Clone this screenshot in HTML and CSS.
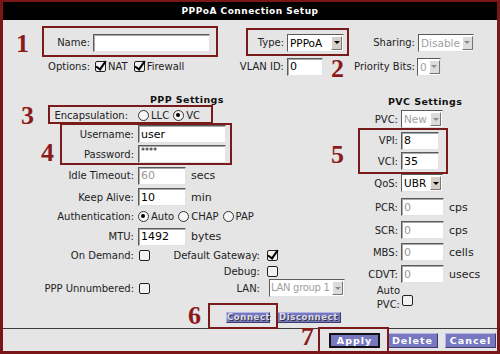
FILE: index.html
```html
<!DOCTYPE html>
<html lang="en">
<head>
  <meta charset="UTF-8">
  <title>PPPoA Connection Setup</title>
  <link rel="stylesheet" href="styles.css">
</head>
<body>

  <div class="frame">
    <div class="title">PPPoA Connection Setup</div>

    <!-- general -->
    <div class="top">
      <span class="lbl">Name:</span>
      <input class="txt w-name" type="text" value="">
      <span class="lbl">Type:</span>
      <span class="sel w-type"><span class="sel-text">PPPoA</span><span class="sel-arrow"></span></span>
      <span class="lbl">Sharing:</span>
      <span class="sel w-share off"><span class="sel-text">Disable</span><span class="sel-arrow"></span></span>

      <span class="lbl">Options:</span>
      <span class="checks">
        <span class="cb on"></span>NAT
        <span class="cb on"></span>Firewall
      </span>
      <span class="lbl">VLAN ID:</span>
      <input class="txt w-vlan" type="text" value="0">
      <span class="lbl">Priority Bits:</span>
      <span class="sel w-prio off"><span class="sel-text">0</span><span class="sel-arrow"></span></span>
    </div>

    <div class="middle">
      <!-- PPP -->
      <div class="ppp">
        <div class="head ppp-head">PPP Settings</div>

        <span class="lbl lbl-encap">Encapsulation:</span>
        <span class="field">
          <span class="rd"></span>LLC
          <span class="rd on"></span>VC
        </span>

        <span class="lbl">Username:</span>
        <span class="field"><input class="txt w-user" type="text" value="user"></span>

        <span class="lbl">Password:</span>
        <span class="field"><input class="txt w-user pw" type="text" value="****"></span>

        <span class="lbl">Idle Timeout:</span>
        <span class="field"><input class="txt w-short dim" type="text" value="60"><span class="unit">secs</span></span>

        <span class="lbl">Keep Alive:</span>
        <span class="field"><input class="txt w-short" type="text" value="10"><span class="unit">min</span></span>

        <span class="lbl">Authentication:</span>
        <span class="field">
          <span class="rd on"></span>Auto
          <span class="rd"></span>CHAP
          <span class="rd"></span>PAP
        </span>

        <span class="lbl">MTU:</span>
        <span class="field"><input class="txt w-short" type="text" value="1492"><span class="unit">bytes</span></span>

        <span class="lbl">On Demand:</span>
        <span class="cb"></span>
        <span class="lbl c3">Default Gateway:</span>
        <span class="c4"><span class="cb on"></span></span>

        <span class="lbl c3">Debug:</span>
        <span class="c4"><span class="cb"></span></span>

        <span class="lbl">PPP Unnumbered:</span>
        <span class="cb"></span>
        <span class="lbl c3">LAN:</span>
        <span class="c4"><span class="sel w-lan off"><span class="sel-text">LAN group 1</span><span class="sel-arrow"></span></span></span>
      </div>

      <!-- PVC -->
      <div class="pvc">
        <div class="head pvc-head">PVC Settings</div>

        <span class="lbl">PVC:</span>
        <span class="field"><span class="sel w-pvc off"><span class="sel-text">New</span><span class="sel-arrow"></span></span></span>

        <span class="lbl">VPI:</span>
        <span class="field"><input class="txt w-vp" type="text" value="8"></span>

        <span class="lbl">VCI:</span>
        <span class="field"><input class="txt w-vp" type="text" value="35"></span>

        <span class="lbl">QoS:</span>
        <span class="field"><span class="sel w-pvc"><span class="sel-text">UBR</span><span class="sel-arrow"></span></span></span>

        <span class="lbl">PCR:</span>
        <span class="field"><input class="txt w-rate dim" type="text" value="0"><span class="unit">cps</span></span>

        <span class="lbl">SCR:</span>
        <span class="field"><input class="txt w-rate dim" type="text" value="0"><span class="unit">cps</span></span>

        <span class="lbl">MBS:</span>
        <span class="field"><input class="txt w-rate dim" type="text" value="0"><span class="unit">cells</span></span>

        <span class="lbl">CDVT:</span>
        <span class="field"><input class="txt w-rate dim" type="text" value="0"><span class="unit">usecs</span></span>

        <span class="lbl lbl-two">Auto<br>PVC:</span>
        <span class="field"><span class="cb"></span></span>
      </div>
    </div>

    <div class="actions">
      <button class="btn-sm w-conn">Connect</button>
      <button class="btn-sm w-disc">Disconnect</button>
    </div>

    <div class="footer">
      <button class="btn focus">Apply</button>
      <button class="btn">Delete</button>
      <button class="btn">Cancel</button>
    </div>

    <!-- callouts -->
    <div class="box b1"></div>
    <div class="box b2"></div>
    <div class="box b3"></div>
    <div class="box b4"></div>
    <div class="box b5"></div>
    <div class="box b6"></div>
    <div class="box b7"></div>
    <span class="num n1">1</span>
    <span class="num n2">2</span>
    <span class="num n3">3</span>
    <span class="num n4">4</span>
    <span class="num n5">5</span>
    <span class="num n6">6</span>
    <span class="num n7">7</span>
  </div>

</body>
</html>
```

FILE: styles.css
```css
body {
  margin: 0;
  background: #fff;
}

.frame {
  position: relative;
  width: 500px;
  height: 354px;
  box-sizing: border-box;
  border: 3px solid #7b1616;
  border-top-width: 2px;
  background: #e5e5e5;
  font-family: "DejaVu Sans", sans-serif;
  font-size: 10px;
  color: #222;
  overflow: hidden;
}

.title {
  height: 18px;
  line-height: 18px;
  background: #000;
  color: #fff;
  font-weight: bold;
  font-size: 9px;
  letter-spacing: 0.5px;
  text-align: center;
}

.lbl {
  text-align: right;
  padding-right: 3px;
  white-space: nowrap;
}

/* top block */
.top {
  display: grid;
  grid-template-columns: 90px 140px 54px 61px 70px 1fr;
  grid-template-rows: 19px 19px;
  row-gap: 5px;
  margin-top: 13px;
  align-items: center;
}

.top .lbl:nth-of-type(5n) {
  padding-right: 2px;
}

.checks {
  display: flex;
  align-items: center;
  padding-left: 2px;
}

.checks .cb {
  margin-right: 2px;
}

.checks .cb + .cb,
.checks .cb:nth-child(2) {
  margin-left: 6px;
}

/* inputs */
.txt {
  display: block;
  box-sizing: border-box;
  height: 18px;
  margin: 0;
  padding: 0 2px;
  border: 1px solid;
  border-color: #5a5a5a #e2e2e2 #e2e2e2 #5a5a5a;
  box-shadow: inset 1px 1px 0 #a8a8a8;
  background: #fff;
  font-family: "DejaVu Sans", sans-serif;
  font-size: 11px;
  color: #000;
}

.txt.dim {
  color: #999;
}

.txt.pw {
  font-size: 8px;
  line-height: 10px;
  padding-bottom: 5px;
}

.w-name { width: 117px; }
.w-vlan { width: 36px; }
.w-user { width: 88px; }
.w-short { width: 48px; }
.w-vp { width: 38px; }
.w-rate { width: 43px; }

/* fake selects */
.sel {
  display: flex;
  box-sizing: border-box;
  height: 18px;
  border: 1px solid;
  border-color: #5a5a5a #e2e2e2 #e2e2e2 #5a5a5a;
  background: #fff;
  justify-self: start;
  font-size: 10.5px;
  color: #000;
}

.sel-text {
  flex: 1;
  padding: 0 1px 0 2px;
  line-height: 16px;
  white-space: nowrap;
}

.sel-arrow {
  flex: none;
  width: 9px;
  margin: 1px;
  background: #d4d0c8;
  border: 1px solid;
  border-color: #fff #777 #777 #fff;
  display: flex;
  align-items: center;
  justify-content: center;
}

.sel-arrow::after {
  content: "";
  border-left: 3px solid transparent;
  border-right: 3px solid transparent;
  border-top: 3px solid #000;
}

.sel.off .sel-text {
  color: #a0a0a0;
}

.sel.off .sel-arrow::after {
  border-top-color: #8a8a8a;
}

.sel.off .sel-arrow {
  background: #dcdcdc;
}

.w-type { width: 57px; }
.w-share { width: 56px; }
.w-prio { width: 24px; margin-left: -1px; }
.w-pvc { width: 42px; }
.w-lan { width: 76px; margin-left: 2px; }
.w-lan .sel-text { font-size: 10px; letter-spacing: -0.3px; padding-left: 1px; }

/* checkbox / radio */
.cb {
  position: relative;
  display: inline-block;
  box-sizing: border-box;
  width: 11px;
  height: 11px;
  border: 1.5px solid #222;
  border-radius: 2px;
  background: #f2f2f2;
}

.cb.on::after {
  content: "";
  position: absolute;
  left: 2px;
  top: -3px;
  width: 4px;
  height: 9px;
  border-right: 2.5px solid #000;
  border-bottom: 2.5px solid #000;
  transform: rotate(35deg);
}

.rd {
  position: relative;
  display: inline-block;
  box-sizing: border-box;
  width: 11px;
  height: 11px;
  border: 1.2px solid #333;
  border-radius: 50%;
  background: #f7f7f7;
  margin-right: 2px;
}

.rd.on::after {
  content: "";
  position: absolute;
  left: 2.3px;
  top: 2.3px;
  width: 4px;
  height: 4px;
  border-radius: 50%;
  background: #000;
}

.field .rd:not(:first-child) {
  margin-left: 4px;
}

/* middle */
.middle {
  display: flex;
  align-items: flex-start;
  margin-top: 16px;
  height: 219px;
}

.head {
  grid-column: 1 / -1;
  font-weight: bold;
  font-size: 9.5px;
  letter-spacing: 0.4px;
  color: #111;
}

.ppp-head { padding-left: 147px; }
.pvc-head { padding-left: 38px; }

.ppp {
  width: 347px;
  display: grid;
  grid-template-columns: 135px 30px 97px 1fr;
  grid-template-rows: 14px 18px 20px 20px 23px 20px 19px 21px 16px 16px 18px;
  align-items: center;
}

.ppp > .lbl {
  padding-right: 4px;
}

.ppp > .lbl-encap {
  padding-right: 10px;
}

.ppp > .cb {
  margin-left: 1px;
}

.field {
  grid-column: 2 / -1;
  display: flex;
  align-items: center;
}

.ppp .c3 {
  grid-column: 3;
  padding-right: 5px;
}

.c4 {
  grid-column: 4;
  display: flex;
  align-items: center;
  padding-left: 2px;
}

.unit {
  margin-left: 5px;
  font-size: 11px;
}

.pvc {
  flex: 1;
  margin-top: 2px;
  display: grid;
  grid-template-columns: 51px 1fr;
  grid-template-rows: 14px 22px 21px 20px 24px 24px 22px 22px 22px 26px;
  align-items: center;
}

.pvc .field {
  grid-column: 2;
}

.pvc .lbl-two {
  line-height: 14px;
  padding-right: 1px;
}

.pvc .field .cb {
  margin-left: 1px;
  margin-top: 4px;
}

/* buttons */
.actions {
  display: flex;
  gap: 6px;
  padding-left: 223px;
  margin-top: 1px;
  height: 11px;
}

.btn-sm,
.btn {
  box-sizing: border-box;
  margin: 0;
  padding: 0;
  font-family: "DejaVu Sans", sans-serif;
  font-weight: bold;
  letter-spacing: 1px;
  background: #7878c0;
  border: 1px solid;
  border-color: #b4b4e4 #3c3c6c #3c3c6c #b4b4e4;
}

.btn-sm {
  height: 11px;
  font-size: 8.5px;
  line-height: 9px;
  color: #dcdcec;
  text-shadow: 1px 1px 0 #333;
  letter-spacing: 0.6px;
}

.w-conn { width: 44px; }
.w-disc { width: 65px; }

.footer {
  margin-top: 5px;
  border-top: 1px solid #3a3a3a;
  height: 22px;
  box-sizing: border-box;
  padding: 4px 1px 0 0;
  display: flex;
  justify-content: flex-end;
  gap: 7px;
}

.btn {
  width: 51px;
  height: 15px;
  font-size: 9.5px;
  line-height: 13px;
  color: #fff;
}

.btn.focus {
  border: 2px solid #111;
  line-height: 11px;
}

/* callouts over the screenshot */
.box {
  position: absolute;
  box-sizing: border-box;
  border: 2px solid #7b1a1a;
}

.b1 { left: 39px; top: 24px; width: 176px; height: 31px; }
.b2 { left: 243px; top: 26px; width: 103px; height: 28px; }
.b3 { left: 45px; top: 103px; width: 165px; height: 19px; }
.b4 { left: 57px; top: 121px; width: 172px; height: 42px; }
.b5 { left: 355px; top: 126px; width: 90px; height: 46px; }
.b6 { left: 205px; top: 301px; width: 70px; height: 26px; }
.b7 { left: 315px; top: 325px; width: 71px; height: 30px; }

.num {
  position: absolute;
  font-family: "Liberation Serif", serif;
  font-weight: bold;
  font-size: 26px;
  line-height: 26px;
  color: #8b1a1a;
}

.n1 { left: 13px; top: 29px; }
.n2 { left: 328px; top: 54px; }
.n3 { left: 18px; top: 101px; }
.n4 { left: 38px; top: 138px; }
.n5 { left: 328px; top: 140px; }
.n6 { left: 185px; top: 301px; }
.n7 { left: 298px; top: 322px; }
```
